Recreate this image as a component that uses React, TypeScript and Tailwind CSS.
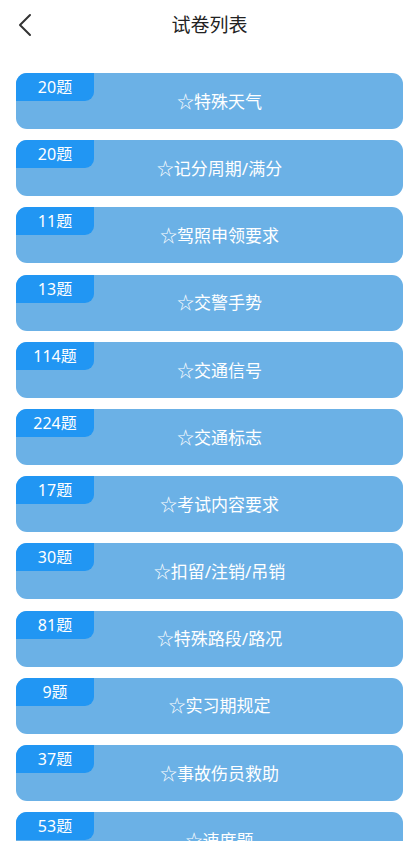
import React from "react";

interface Paper { count: number; name: string }

const papers: Paper[] = [
  { count: 20, name: "特殊天气" },
  { count: 20, name: "记分周期/满分" },
  { count: 11, name: "驾照申领要求" },
  { count: 13, name: "交警手势" },
  { count: 114, name: "交通信号" },
  { count: 224, name: "交通标志" },
  { count: 17, name: "考试内容要求" },
  { count: 30, name: "扣留/注销/吊销" },
  { count: 81, name: "特殊路段/路况" },
  { count: 9, name: "实习期规定" },
  { count: 37, name: "事故伤员救助" },
  { count: 53, name: "速度题" },
];

const font = { fontFamily: '"Noto Sans", "Noto Sans CJK SC", sans-serif' };

export default function App() {
  return (
    <div className="w-[419px] h-[841px] overflow-hidden bg-white" style={font}>
      <header className="relative h-[50px] flex items-center justify-center">
        <button className="absolute left-[12px] top-[11px] w-[26px] h-[28px] flex items-center justify-center text-[#333]">
          <svg width="14" height="24" viewBox="0 0 14 24" fill="none" stroke="currentColor" strokeWidth="2" strokeLinecap="round" strokeLinejoin="round">
            <path d="M12 2 L2 12 L12 22" />
          </svg>
        </button>
        <h1 className="text-[19px] text-[#222] font-normal">试卷列表</h1>
      </header>

      <div className="px-[16px] pt-[23px] flex flex-col gap-[11.2px]">
        {papers.map((p, i) => (
          <div key={i} className="relative h-[56px] shrink-0 rounded-[11px] bg-[#6bb1e6] flex items-center justify-center pl-[20px]">
            <span className="absolute left-0 top-0 w-[78px] h-[28px] bg-[#2196f3] rounded-tl-[11px] rounded-br-[9px] flex items-center justify-center text-white text-[16px]">
              {p.count}题
            </span>
            <span className="text-white text-[17px] pt-[1px]">☆{p.name}</span>
          </div>
        ))}
      </div>
    </div>
  );
}
